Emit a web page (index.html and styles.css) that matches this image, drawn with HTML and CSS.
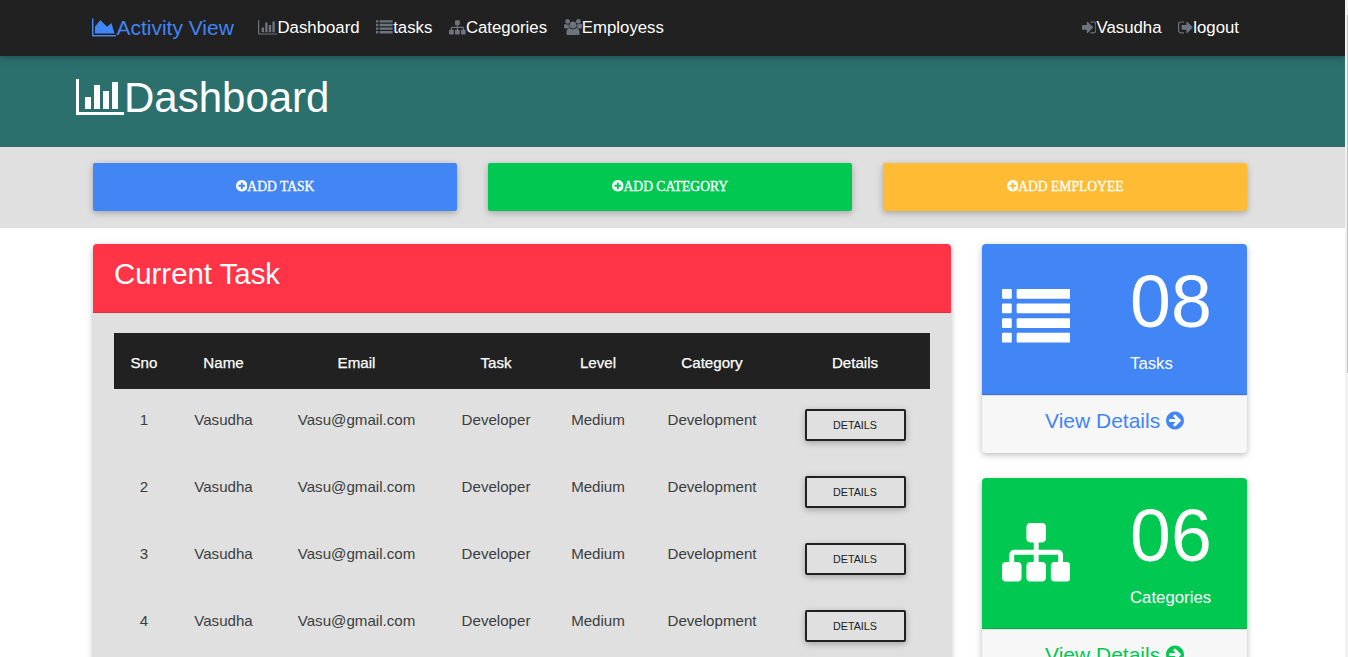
FILE: index.html
```html
<!DOCTYPE html>
<html lang="en">
<head>
<meta charset="utf-8">
<title>Activity View</title>
<link rel="stylesheet" href="styles.css">
</head>
<body>
<svg class="sprite" aria-hidden="true">
  <symbol id="bars" viewBox="0 0 2048 1792"><path d="M640 896v512h-256v-512h256zm384-512v1024h-256v-1024h256zm1024 1152v128h-2048v-1536h128v1408h1920zm-640-896v768h-256v-768h256zm384-384v1152h-256v-1152h256z"/></symbol>
  <symbol id="area" viewBox="0 0 2048 1792"><path d="M2048 1536v128h-2048v-1536h128v1408h1920zm-384-1024l256 896h-1664v-576l448-576 576 576z"/></symbol>
  <symbol id="list" viewBox="0 0 1792 1792"><rect y="128" width="256" height="256" rx="32"/><rect x="384" y="128" width="1408" height="256" rx="32"/><rect y="512" width="256" height="256" rx="32"/><rect x="384" y="512" width="1408" height="256" rx="32"/><rect y="896" width="256" height="256" rx="32"/><rect x="384" y="896" width="1408" height="256" rx="32"/><rect y="1280" width="256" height="256" rx="32"/><rect x="384" y="1280" width="1408" height="256" rx="32"/></symbol>
  <symbol id="sitemap" viewBox="0 0 1792 1792"><path d="M1792 1248v320q0 40-28 68t-68 28h-320q-40 0-68-28t-28-68v-320q0-40 28-68t68-28h96v-192h-512v192h96q40 0 68 28t28 68v320q0 40-28 68t-68 28h-320q-40 0-68-28t-28-68v-320q0-40 28-68t68-28h96v-192h-512v192h96q40 0 68 28t28 68v320q0 40-28 68t-68 28h-320q-40 0-68-28t-28-68v-320q0-40 28-68t68-28h96v-192q0-52 38-90t90-38h512v-192h-96q-40 0-68-28t-28-68v-320q0-40 28-68t68-28h320q40 0 68 28t28 68v320q0 40-28 68t-68 28h-96v192h512q52 0 90 38t38 90v192h96q40 0 68 28t28 68z"/></symbol>
  <symbol id="users" viewBox="0 0 1920 1792"><path d="M593 896q-162 5-265 128h-134q-82 0-138-40.500t-56-118.500q0-353 124-353 6 0 43.500 21t97.500 42.500 119 21.500q67 0 133-23-5 37-5 66 0 159 93 293zm1071 637q0 120-73 189.500t-194 69.500h-874q-121 0-194-69.500t-73-189.500q0-53 3.500-103.500t14-109 26.500-108.500 43-97.500 62-81 85.500-53.500 111.500-20q10 0 43 21.500t73 48 107 48 135 21.500 135-21.500 107-48 73-48 43-21.500q61 0 111.500 20t85.500 53.500 62 81 43 97.500 26.500 108.500 14 109 3.500 103.500zm-1024-1277q0 106-75 181t-181 75-181-75-75-181 75-181 181-75 181 75 75 181zm704 384q0 159-112.500 271.500t-271.500 112.500-271.500-112.500-112.500-271.500 112.500-271.500 271.500-112.500 271.500 112.500 112.500 271.500zm576 225q0 78-56 118.500t-138 40.500h-134q-103-123-265-128 93-134 93-293 0-29-5-66 66 23 133 23 59 0 119-21.500t97.500-42.500 43.500-21q124 0 124 353zm-128-609q0 106-75 181t-181 75-181-75-75-181 75-181 181-75 181 75 75 181z"/></symbol>
  <symbol id="signin" viewBox="128 0 1536 1792"><path d="M1312 896q0 26-19 45l-544 544q-19 19-45 19t-45-19-19-45v-288h-448q-26 0-45-19t-19-45v-384q0-26 19-45t45-19h448v-288q0-26 19-45t45-19 45 19l544 544q19 19 19 45zm352-352v704q0 119-84.500 203.500t-203.500 84.500h-320q-13 0-22.500-9.500t-9.500-22.500q0-4-1-20t-.5-26.500 3-23.500 10-19.500 20.500-6.500h320q66 0 113-47t47-113v-704q0-66-47-113t-113-47h-312l-11.500-1-11.500-3-8-5.500-7-9-2-13.500q0-4-1-20t-.5-26.500 3-23.500 10-19.500 20.500-6.500h320q119 0 203.500 84.500t84.500 203.500z"/></symbol>
  <symbol id="signout" viewBox="64 0 1600 1792"><path d="M704 1440q0 4 1 20t.5 26.500-3 23.500-10 19.500-20.500 6.500h-320q-119 0-203.500-84.500t-84.500-203.500v-704q0-119 84.500-203.500t203.500-84.500h320q13 0 22.500 9.500t9.500 22.500q0 4 1 20t.5 26.500-3 23.500-10 19.500-20.500 6.500h-320q-66 0-113 47t-47 113v704q0 66 47 113t113 47h312l11.500 1 11.500 3 8 5.500 7 9 2 13.500zm928-544q0 26-19 45l-544 544q-19 19-45 19t-45-19-19-45v-288h-448q-26 0-45-19t-19-45v-384q0-26 19-45t45-19h448v-288q0-26 19-45t45-19 45 19l544 544q19 19 19 45z"/></symbol>
  <symbol id="plus" viewBox="128 0 1536 1792"><path d="M1344 960v-128q0-26-19-45t-45-19h-256v-256q0-26-19-45t-45-19h-128q-26 0-45 19t-19 45v256h-256q-26 0-45 19t-19 45v128q0 26 19 45t45 19h256v256q0 26 19 45t45 19h128q26 0 45-19t19-45v-256h256q26 0 45-19t19-45zm320-64q0 209-103 385.500t-279.500 279.500-385.500 103-385.500-103-279.500-279.500-103-385.500 103-385.500 279.500-279.500 385.500-103 385.500 103 279.500 279.500 103 385.500z"/></symbol>
  <symbol id="arrow" viewBox="128 0 1536 1792"><path d="M1413 896q0-27-18-45l-91-91-362-362q-18-18-45-18t-45 18l-91 91q-18 18-18 45t18 45l189 189h-502q-26 0-45 19t-19 45v128q0 26 19 45t45 19h502l-189 189q-19 19-19 45t19 45l91 91q18 18 45 18t45-18l362-362 91-91q18-18 18-45zm251 0q0 209-103 385.500t-279.500 279.500-385.500 103-385.500-103-279.500-279.500-103-385.500 103-385.500 279.500-279.500 385.500-103 385.500 103 279.500 279.500 103 385.500z"/></symbol>
</svg>
<div class="viewport">
<div class="page">
  <nav class="navbar">
    <a class="brand"><svg class="icon w2048"><use href="#area"/></svg>Activity View</a>
    <a class="link"><svg class="icon w2048"><use href="#bars"/></svg>Dashboard</a>
    <a class="link"><svg class="icon"><use href="#list"/></svg>tasks</a>
    <a class="link"><svg class="icon"><use href="#sitemap"/></svg>Categories</a>
    <a class="link"><svg class="icon w1920"><use href="#users"/></svg>Employess</a>
    <a class="link push"><svg class="icon w1536"><use href="#signin"/></svg>Vasudha</a>
    <a class="link"><svg class="icon w1600"><use href="#signout"/></svg>logout</a>
  </nav>
  <header class="banner"><h1><svg class="icon w2048"><use href="#bars"/></svg>Dashboard</h1></header>
  <section class="actions">
    <a class="btn blue"><svg class="icon w1536"><use href="#plus"/></svg>ADD TASK</a>
    <a class="btn green"><svg class="icon w1536"><use href="#plus"/></svg>ADD CATEGORY</a>
    <a class="btn amber"><svg class="icon w1536"><use href="#plus"/></svg>ADD EMPLOYEE</a>
  </section>
  <main class="content">
    <section class="card tasks">
      <h3 class="card-title">Current Task</h3>
      <div class="card-body">
        <table class="table">
          <colgroup><col class="c-sno"><col class="c-name"><col class="c-email"><col class="c-task"><col class="c-level"><col class="c-cat"><col class="c-det"></colgroup>
          <thead><tr><th>Sno</th><th>Name</th><th>Email</th><th>Task</th><th>Level</th><th>Category</th><th>Details</th></tr></thead>
          <tbody>
            <tr><td>1</td><td>Vasudha</td><td>Vasu@gmail.com</td><td>Developer</td><td>Medium</td><td>Development</td><td><a class="details">DETAILS</a></td></tr>
            <tr><td>2</td><td>Vasudha</td><td>Vasu@gmail.com</td><td>Developer</td><td>Medium</td><td>Development</td><td><a class="details">DETAILS</a></td></tr>
            <tr><td>3</td><td>Vasudha</td><td>Vasu@gmail.com</td><td>Developer</td><td>Medium</td><td>Development</td><td><a class="details">DETAILS</a></td></tr>
            <tr><td>4</td><td>Vasudha</td><td>Vasu@gmail.com</td><td>Developer</td><td>Medium</td><td>Development</td><td><a class="details">DETAILS</a></td></tr>
          </tbody>
        </table>
      </div>
    </section>
    <aside class="stats">
      <div class="card stat">
        <div class="stat-top blue"><svg class="icon big"><use href="#list"/></svg><div class="figures"><div class="num">08</div><div class="label">Tasks</div></div></div>
        <a class="more blue-text">View Details <svg class="icon w1536"><use href="#arrow"/></svg></a>
      </div>
      <div class="card stat">
        <div class="stat-top green"><svg class="icon big"><use href="#sitemap"/></svg><div class="figures"><div class="num">06</div><div class="label">Categories</div></div></div>
        <a class="more green-text">View Details <svg class="icon w1536"><use href="#arrow"/></svg></a>
      </div>
    </aside>
  </main>
</div>
<div class="scrollbar"><div class="thumb"></div></div>
</div>
</body>
</html>
```
FILE: styles.css
```css
* { box-sizing: border-box; }
html { font-size: 16.8px; }
body { margin: 0; overflow: hidden; background: #fff; color: #212529; font-family: "Liberation Sans", Arial, sans-serif; }
.sprite { display: none; }
.viewport { display: flex; height: 657px; overflow: hidden; }
.page { width: 1345px; overflow: hidden; }
.scrollbar { width: 3px; padding: 15px 0 0 2px; background: #f1f1f1; }
.thumb { height: 358px; background: #c1c1c1; }

.icon { width: 1em; height: 1em; fill: currentColor; vertical-align: -0.143em; flex: none; }
.w2048 { width: 1.143em; }
.w1920 { width: 1.071em; }
.w1600 { width: 0.893em; }
.w1536 { width: 0.857em; }

.navbar { position: relative; display: flex; align-items: baseline; height: 56px; padding: 15px 97.600px 0 92.400px; background: #212121; box-shadow: 0 2px 5px rgba(0,0,0,.16), 0 2px 10px rgba(0,0,0,.12); white-space: nowrap; }
.brand { font-size: 21px; line-height: 26px; margin-right: 16px; color: #4285f4; }
.link { position: relative; top: -2px; padding: 0 8.400px; font-size: 1rem; line-height: 24px; color: #fff; }
.link .icon { fill: #6c757d; }
.push { margin-left: auto; }

.banner { height: 91px; padding: 17px 0 0 76px; background: #2c706e; color: #fff; }
.banner h1 { margin: 0; font-size: 42px; line-height: 50px; font-weight: 400; }

.actions { display: flex; gap: 31px; height: 81px; padding: 16px 98px 17px 93px; background: #e0e0e0; }
.btn { flex: 1; border-radius: 2px; color: #fff; font-family: "Liberation Serif", "Times New Roman", serif; font-size: 13.600px; line-height: 47px; text-align: center; -webkit-text-stroke: .3px #fff; box-shadow: 0 2px 5px rgba(0,0,0,.16), 0 2px 10px rgba(0,0,0,.12); }
.btn .icon { stroke: none; }
.blue { background: #4285f4; }
.green { background: #00c851; }
.amber { background: #fb3; }

.content { display: grid; grid-template-columns: 858px 265px; gap: 31px; padding: 16px 98px 0 93px; }
.card { border-radius: 4px; box-shadow: 0 2px 5px rgba(0,0,0,.16), 0 2px 10px rgba(0,0,0,.12); }
.tasks { background: #e0e0e0; }
.card-title { height: 69px; margin: 0; padding: 12px 21px; border-bottom: 1px solid #df3040; border-radius: 4px 4px 0 0; background: #ff3547; color: #fff; font-size: 29.400px; line-height: 35px; font-weight: 400; }
.card-body { padding: 20px 21px; }
.table { width: 816px; table-layout: fixed; border-collapse: collapse; text-align: center; font-size: 15.120px; }
.c-sno { width: 60px; }
.c-name { width: 99px; }
.c-email { width: 167px; }
.c-task { width: 112px; }
.c-level { width: 92px; }
.c-cat { width: 136px; }
.c-det { width: 150px; }
.table th { height: 56px; padding: 2px 0 0; background: #212121; color: #fff; font-weight: 400; -webkit-text-stroke: .25px #fff; }
.table td { height: 67px; padding: 20px 0 0; line-height: 22px; vertical-align: top; color: #3b3e41; }
.details { display: block; width: 101px; height: 32px; margin: 0 auto; border: 2px solid #212121; border-radius: 2px; color: #212121; font-size: 10.750px; line-height: 29px; box-shadow: 0 2px 5px rgba(0,0,0,.16), 0 2px 10px rgba(0,0,0,.12); }

.stats { display: grid; gap: 25px; align-content: start; }
.stat { height: 209px; background: #f7f7f7; overflow: hidden; }
.stat-top { display: grid; grid-template-columns: 128px 1fr; height: 151px; padding: 17px 0 0 20px; border-bottom: 1px solid rgba(0,0,0,.125); color: #fff; }
.big { width: 68.400px; height: 68.400px; margin-top: 23px; }
.num { font-size: 73.500px; line-height: 82px; }
.label { margin-top: 8px; font-size: 1rem; line-height: 25px; }
.more { display: block; height: 58px; padding-top: 12px; border-top: 1px solid #dfdfdf; text-align: center; font-size: 21px; line-height: 25px; }
.blue-text { color: #4285f4; }
.green-text { color: #00c851; }
```
